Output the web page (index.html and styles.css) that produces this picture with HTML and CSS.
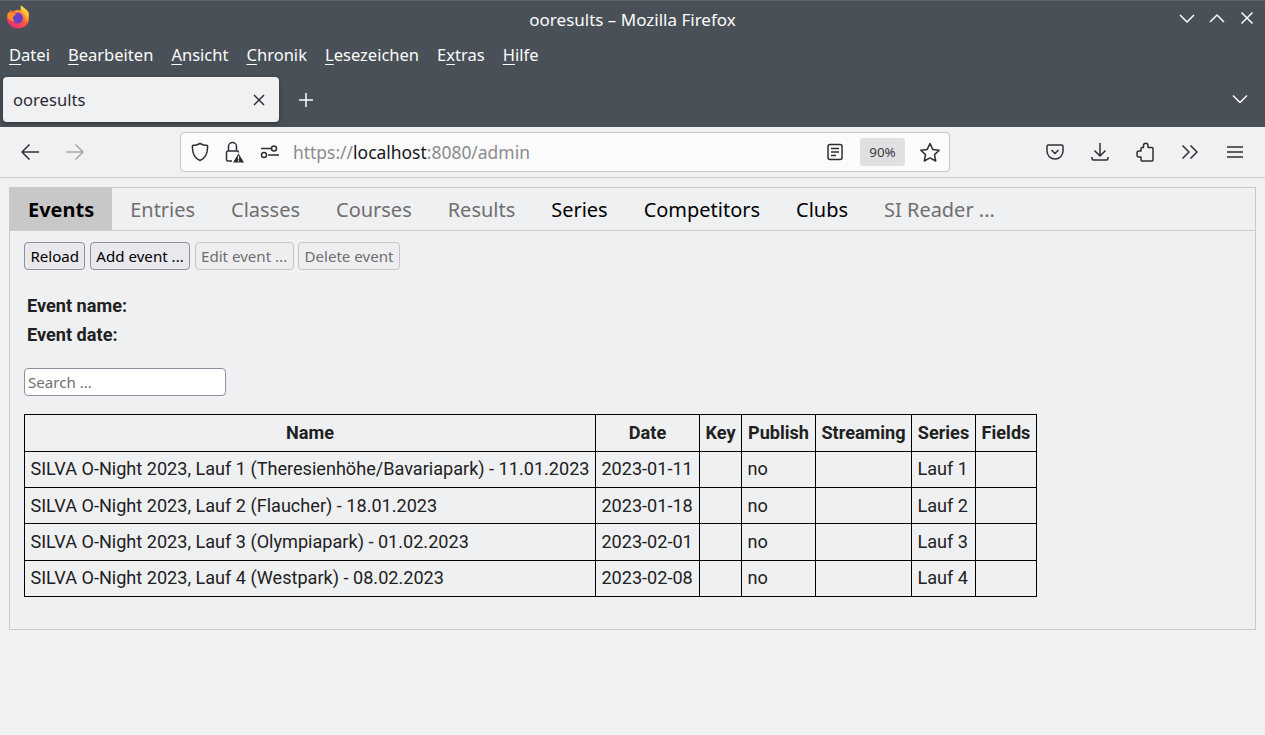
FILE: index.html
```html
<!DOCTYPE html>
<html>
<head>
  <title>ooresults</title>
  <link rel="stylesheet" href="styles.css">
</head>
<body>
  <div class="chrome">
    <div class="titlebar">
      <svg class="fx-logo" width="24" height="24" viewBox="0 0 24 24">
        <defs>
          <linearGradient id="fxBody" x1="0.8" y1="0.1" x2="0.2" y2="0.95">
            <stop offset="0" stop-color="#ffb02e"/>
            <stop offset="0.45" stop-color="#ff5a3c"/>
            <stop offset="1" stop-color="#e8267e"/>
          </linearGradient>
          <linearGradient id="fxFlame" x1="0.5" y1="0" x2="0.5" y2="1">
            <stop offset="0" stop-color="#ffe14a"/>
            <stop offset="1" stop-color="#ff9a26"/>
          </linearGradient>
        </defs>
        <path d="M5 4.500c.3 1 .7 1.700 1.500 2.200C8 5.500 10 5 12 5c6 0 11 3.500 11 8.500C23 19.500 18 23.500 12 23.500S1 19 1 13c0-2 .8-3.800 1.800-5 .5-1.300 1.200-2.500 2.200-3.500z" fill="url(#fxBody)"/>
        <path d="M15 0.500c-.8 2.500-.5 4.500 1.500 6.500 3 2.800 4 6 3 9.500 2.500-1.500 3.700-4.500 3.500-7.500C22.500 5.500 18.500 3.500 15 0.500z" fill="url(#fxFlame)"/>
        <circle cx="11.500" cy="13" r="5.500" fill="#6c3fc6"/>
        <path d="M2.500 7.500c1 .6 2 .6 3.500.4 1.500-.2 3.500.6 4.500 1.800-2 0-3.500 1.500-3.500 3.500 0 1.500 1 2.800 2 3.500-3.500-.3-6.500-2-7.500-4.500-.3-1.500 0-3.500.5-4.700z" fill="#ff8f26"/>
      </svg>
      <div class="window-title">ooresults – Mozilla Firefox</div>
      <div class="window-btns">
        <svg width="16" height="16" viewBox="0 0 16 16"><path d="M1 5l7 7 7-7" class="line-w"/></svg>
        <svg width="16" height="16" viewBox="0 0 16 16"><path d="M1 12l7-7 7 7" class="line-w"/></svg>
        <svg width="16" height="16" viewBox="0 0 16 16"><path d="M2.500 2.500l11 11M13.500 2.500l-11 11" class="line-w"/></svg>
      </div>
    </div>
    <div class="menubar">
      <span><u>D</u>atei</span>
      <span><u>B</u>earbeiten</span>
      <span><u>A</u>nsicht</span>
      <span><u>C</u>hronik</span>
      <span><u>L</u>esezeichen</span>
      <span>E<u>x</u>tras</span>
      <span><u>H</u>ilfe</span>
    </div>
    <div class="tabstrip">
      <div class="tab">
        <span>ooresults</span>
        <svg width="12" height="12" viewBox="0 0 12 12"><path d="M1 1l10 10M11 1L1 11" class="line-d"/></svg>
      </div>
      <svg class="newtab" width="16" height="16" viewBox="0 0 16 16"><path d="M8 1v14M1 8h14" class="line-w"/></svg>
      <svg class="tabs-menu" width="18" height="18" viewBox="0 0 18 18"><path d="M2 5.500l7 7 7-7" class="line-w"/></svg>
    </div>
  </div>

  <div class="navbar">
    <svg class="nav-back" width="20" height="20" viewBox="0 0 20 20"><path d="M19 10H2M9.500 2.500L2 10l7.500 7.500" class="line-d"/></svg>
    <svg class="nav-fwd" width="20" height="20" viewBox="0 0 20 20"><path d="M1 10h17M10.500 2.500L18 10l-7.500 7.500" class="line-g"/></svg>
    <div class="urlbar">
      <svg width="18" height="20" viewBox="0 0 18 20"><path d="M9 1.500c2.500 1.500 4.500 2 7.500 2 .5 7-2 12.500-7.500 15-5.500-2.500-8-8-7.500-15 3 0 5-.5 7.500-2z" class="line-d"/></svg>
      <svg class="lock" width="20" height="22" viewBox="0 0 20 22">
        <path d="M7 20H3A1.500 1.500 0 0 1 1.500 18.500V11.500A1.500 1.500 0 0 1 3 10h9A1.500 1.500 0 0 1 13.500 11.500M3.500 10V5.500a4 4 0 0 1 8 0V10" class="line-d"/>
        <path d="M13.500 12.500l5.500 9H8z" fill="#2b2a33"/>
        <path d="M13.500 15v3.500M13.500 19.300v1.200" stroke="#fff" stroke-width="1.200"/>
      </svg>
      <svg class="perm" width="20" height="14" viewBox="0 0 20 14">
        <circle cx="14" cy="3.500" r="2.500" class="line-d"/>
        <circle cx="4" cy="10" r="2.500" class="line-d"/>
        <path d="M1 3.500h10M8 10h11" class="line-d"/>
      </svg>
      <div class="url"><span class="url-dim">https://</span>localhost<span class="url-dim">:8080/admin</span></div>
      <svg class="reader" width="16" height="18" viewBox="0 0 16 18">
        <rect x="1" y="1.500" width="14" height="15" rx="2" class="line-d"/>
        <path d="M4 5.500h8M4 9h8M4 12.500h5" class="line-d"/>
      </svg>
      <div class="zoom">90%</div>
      <svg class="star" width="22" height="20" viewBox="0 0 22 20"><path d="M11 1.500l2.800 5.900 6.400.8-4.700 4.400 1.200 6.400-5.700-3.100-5.700 3.100 1.200-6.400L1.800 8.200l6.400-.8z" class="line-d"/></svg>
    </div>
    <div class="nav-tools">
      <svg width="18" height="16" viewBox="0 0 18 16"><path d="M2.500 1h13A1.500 1.500 0 0 1 17 2.500V7a8 8 0 0 1-16 0V2.500A1.500 1.500 0 0 1 2.500 1zM5.500 6L9 9.500 12.500 6" class="line-d"/></svg>
      <svg width="18" height="20" viewBox="0 0 18 20"><path d="M9 1v13M3.500 8.500L9 14l5.500-5.500M1 15v1.500A1.500 1.500 0 0 0 2.500 18h13a1.500 1.500 0 0 0 1.500-1.500V15" class="line-d"/></svg>
      <svg width="18" height="20" viewBox="0 0 18 20"><path d="M7.500 5.500V3.500a2.250 2.250 0 0 1 4.500 0v2H16a1 1 0 0 1 1 1V18a1 1 0 0 1-1 1H6a1 1 0 0 1-1-1v-3H3a2 2 0 0 1-2-2v-2a2 2 0 0 1 2-2h2V6.500a1 1 0 0 1 1-1z" class="line-d"/></svg>
      <svg width="18" height="16" viewBox="0 0 18 16"><path d="M1.500 1.500L8 8l-6.500 6.500M9.500 1.500L16 8l-6.500 6.500" class="line-d"/></svg>
      <svg class="hamburger" width="16" height="14" viewBox="0 0 16 14"><path d="M0 2h16M0 7h16M0 12h16" class="line-d"/></svg>
    </div>
  </div>

  <div class="page">
    <div class="panel">
      <ul class="tabs">
        <li class="active">Events</li>
        <li class="off">Entries</li>
        <li class="off">Classes</li>
        <li class="off">Courses</li>
        <li class="off">Results</li>
        <li>Series</li>
        <li>Competitors</li>
        <li>Clubs</li>
        <li class="off">SI Reader ...</li>
      </ul>
      <div class="panel-body">
        <div class="actions">
          <button>Reload</button>
          <button>Add event ...</button>
          <button disabled>Edit event ...</button>
          <button disabled>Delete event</button>
        </div>
        <div class="event-info">
          <div>Event name:</div>
          <div>Event date:</div>
        </div>
        <input class="search" type="text" placeholder="Search ...">
        <table>
          <colgroup>
            <col class="col-name"><col class="col-date"><col class="col-key"><col class="col-publish"><col class="col-streaming"><col class="col-series"><col class="col-fields">
          </colgroup>
          <thead>
            <tr>
              <th>Name</th><th>Date</th><th>Key</th><th>Publish</th><th>Streaming</th><th>Series</th><th>Fields</th>
            </tr>
          </thead>
          <tbody>
            <tr>
              <td>SILVA O-Night 2023, Lauf 1 (Theresienhöhe/Bavariapark) - 11.01.2023</td>
              <td>2023-01-11</td><td></td><td>no</td><td></td><td>Lauf 1</td><td></td>
            </tr>
            <tr>
              <td>SILVA O-Night 2023, Lauf 2 (Flaucher) - 18.01.2023</td>
              <td>2023-01-18</td><td></td><td>no</td><td></td><td>Lauf 2</td><td></td>
            </tr>
            <tr>
              <td>SILVA O-Night 2023, Lauf 3 (Olympiapark) - 01.02.2023</td>
              <td>2023-02-01</td><td></td><td>no</td><td></td><td>Lauf 3</td><td></td>
            </tr>
            <tr>
              <td>SILVA O-Night 2023, Lauf 4 (Westpark) - 08.02.2023</td>
              <td>2023-02-08</td><td></td><td>no</td><td></td><td>Lauf 4</td><td></td>
            </tr>
          </tbody>
        </table>
      </div>
    </div>
  </div>
</body>
</html>
```

FILE: styles.css
```css
html, body {
  margin: 0;
  height: 100%;
  overflow: hidden;
}

body {
  font-family: Roboto, sans-serif;
  background-color: #f0f1f3;
  color: #1f1f1f;
}

svg {
  flex: none;
  display: block;
}

.line-w, .line-d, .line-g {
  fill: none;
  stroke-width: 1.5;
  stroke-linejoin: round;
}

.line-w {
  stroke: #fcfcfc;
}

.line-d {
  stroke: #2f2f36;
}

.line-g {
  stroke: #a4a6aa;
}

/* window frame */
.chrome {
  height: 127px;
  background-color: #495057;
  border-top: 1px solid #5d666e;
  box-sizing: border-box;
  font-family: "Noto Sans", sans-serif;
  color: #fcfcfc;
}

.titlebar {
  height: 36px;
  position: relative;
  display: flex;
  align-items: center;
  justify-content: center;
  font-size: 17px;
}

.fx-logo {
  position: absolute;
  left: 6px;
  top: 4px;
}

.window-btns {
  position: absolute;
  right: 10px;
  top: 9px;
  display: flex;
  gap: 14px;
}

.menubar {
  height: 34px;
  padding-left: 9px;
  display: flex;
  align-items: center;
  gap: 18px;
  font-size: 16.55px;
}

.menubar u {
  text-underline-offset: 3px;
  text-decoration-thickness: 1px;
}

.tabstrip {
  height: 56px;
  padding-left: 3px;
  display: flex;
  align-items: flex-start;
}

.tab {
  width: 276px;
  height: 45px;
  margin-top: 6px;
  padding: 0 14px 0 10px;
  box-sizing: border-box;
  display: flex;
  align-items: center;
  justify-content: space-between;
  background-color: #f0f1f3;
  border-radius: 4px;
  box-shadow: 0 1px 4px rgba(0, 0, 0, 0.4);
  color: #2b2a33;
  font-size: 16.6px;
}

.newtab {
  margin: 21px 0 0 19px;
}

.tabs-menu {
  margin: 19px 16px 0 auto;
}

/* nav bar */
.navbar {
  height: 51px;
  box-sizing: border-box;
  display: flex;
  align-items: center;
  background-color: #f0f1f3;
  border-bottom: 1px solid #c9cacc;
  padding-bottom: 1px;
}

.nav-back {
  margin-left: 20px;
}

.nav-fwd {
  margin-left: 25px;
}

.urlbar {
  width: 770px;
  height: 40px;
  box-sizing: border-box;
  margin-left: 95px;
  padding: 0 8px 0 10px;
  display: flex;
  align-items: center;
  background-color: #fbfbfc;
  border: 1px solid #c4c5c9;
  border-radius: 4px;
}

.urlbar .lock {
  margin-left: 16px;
}

.urlbar .perm {
  margin-left: 15px;
}

.url {
  margin-left: 13px;
  flex: 1;
  font-family: "Noto Sans", sans-serif;
  font-size: 17.45px;
  color: #15141a;
}

.url-dim {
  color: #8a8a8f;
}

.reader {
  margin-right: 1px;
}

.zoom {
  width: 45px;
  height: 28px;
  margin: 0 14px 0 16px;
  background-color: #e0e0e2;
  border-radius: 3px;
  text-align: center;
  line-height: 28px;
  font-family: "Noto Sans", sans-serif;
  font-size: 13.4px;
  color: #3a3a40;
}

.nav-tools {
  margin-left: 96px;
  display: flex;
  align-items: center;
  gap: 27px;
}

.hamburger {
  margin-left: 1px;
}

/* app */
.page {
  padding: 9px 9px 0;
}

.panel {
  height: 443px;
  box-sizing: border-box;
  background-color: #eff0f2;
  border: 1px solid #c8c9cc;
}

.tabs {
  margin: 0;
  padding: 0;
  list-style: none;
  display: flex;
  height: 42px;
  border-bottom: 1px solid #c8c9cc;
  font-family: "Noto Sans", sans-serif;
  font-size: 19.98px;
  color: #000;
}

.tabs li {
  padding: 2px 18px 0;
  line-height: 40px;
}

.tabs li.active {
  background-color: #c8c8c8;
  font-weight: bold;
}

.tabs li.off {
  color: #6f6f6f;
}

.panel-body {
  padding: 11px 14px 0;
}

.actions {
  display: flex;
  gap: 4.5px;
}

button {
  height: 28px;
  padding: 0 5.4px;
  font-family: "Noto Sans", sans-serif;
  font-size: 15.1px;
  color: #000;
  background-color: #e9e9ed;
  border: 1px solid #8f8f9d;
  border-radius: 4px;
}

button:disabled {
  color: #6f6f6f;
  background-color: #eeeef1;
  border-color: #c4c4ca;
}

.event-info {
  margin: 21px 0 19px 3px;
  font-size: 18.14px;
  font-weight: bold;
  line-height: 29px;
  color: #212121;
}

.search {
  display: block;
  width: 202px;
  height: 28px;
  box-sizing: border-box;
  padding: 0 3px;
  font-family: "Noto Sans", sans-serif;
  font-size: 15.1px;
  background-color: #fff;
  border: 1px solid #8f8f9d;
  border-radius: 4px;
}

.search::placeholder {
  color: #6f6f6f;
}

table {
  margin-top: 18px;
  width: 1012px;
  table-layout: fixed;
  border-collapse: collapse;
  font-size: 18.1px;
  color: #212121;
}

.col-name { width: 571px; }
.col-date { width: 104px; }
.col-key { width: 42px; }
.col-publish { width: 74px; }
.col-streaming { width: 96px; }
.col-series { width: 64px; }
.col-fields { width: 61px; }

th, td {
  border: 1px solid #000;
  padding: 0 5.44px 1.5px;
  box-sizing: border-box;
  white-space: nowrap;
}

th {
  height: 37px;
}

td {
  height: 36.2px;
}
```
